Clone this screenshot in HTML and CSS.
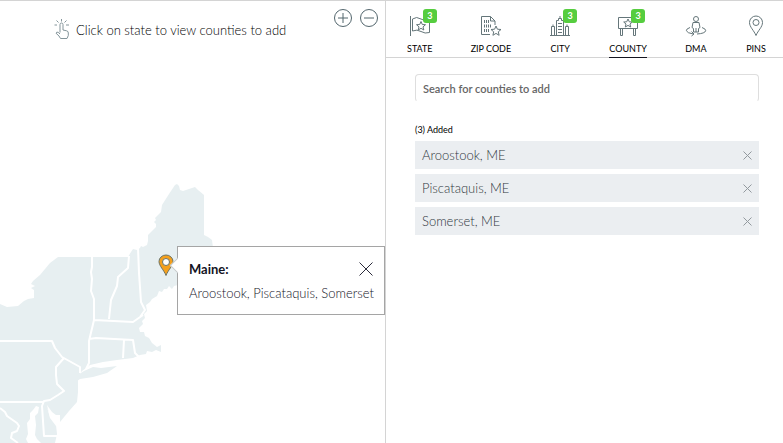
FILE: index.html
```
<!DOCTYPE html>
<html lang="en">
<head>
<meta charset="utf-8">
<meta name="viewport" content="width=device-width, initial-scale=1">
<title>Counties</title>
<link rel="stylesheet" href="styles.css">
</head>
<body>
<div class="app">
  <section class="map-pane" aria-label="Map">
    <svg class="map" width="385" height="443" viewBox="0 0 385 443" aria-hidden="true">
      <path class="land" d="M0 304 7 307 18 306 24 301 28 299 34 298V290L31 288 35 286 31 284 33 281 40 275 50 263 58 257H128L131 252 133 249 137 250 140 248 141 246 143 247 147 245 148 241 148 235 156 227 156 224 154 222 156 220 155 218 158 215 161 212 162 205 169 194 175 185 177 184 179 186 180 190 183 191 195 187 198 190 204 195V235L208 237 212 240 213 248 205 262 190 278 178 285 174 286 172 289 169 286 167 289 164 289 162 292 159 291 157 296 152 299 150 302 146 305 147 311 144 314 145 318 142 321 143 324 139 328 140 332 144 332 145 336 149 338 152 343 157 347 161 345 161 352 156 350 152 352 147 351 146 354 140 355 133 358 117 360 103 362 90 365 82 371 78 377 78 392 77 402 69 411 60 422 60 416 56 415 52 412 47 405 50 417 56 425 57 434 55 443H0Z"/>
      <path class="land" d="M81 373 84 371 93 367 101 368 117 366 107 373 93 377 80 379 77 381 74 379 77 376Z"/>
      <path class="border" d="M92 257V267L91 272 92 279 91 291 94 299V320L89 341V363L86 369M129 256 128 268 118 277 117 286 111 300 109 319M138 248 139 273 141 302 145 310 140 317M94 320 133 322 143 315M89 339 96 338 133 340 135 353 139 357M124 340 123 358M0 341H52L55 348 62 357 80 367 80 373M64 358 56 367V375L57 384 64 391 58 395 50 400 44 401 42 406 44 436H57M0 402H43M0 408 5 412 7 416 17 423 19 426 17 431 12 433 11 438 18 443"/>
      <path class="bay" d="m36 406 3 1-1 6-3 3 1 9-1 10 2 4 4 4-13 0-2-4 2-5-1-11 3-4 0-6 3-3ZM47 407 49 412 55 415 60 415V422L56 426 50 418Z"/>
    </svg>
    <header class="map-bar">
      <svg class="tap" width="18" height="22" viewBox="0 0 18 22" aria-hidden="true"><path d="M6 14.500V6.500a1.300 1.300 0 0 1 3 0V12l3.600.800q1.900.5 1.700 2.200v2.500L13 20.500H6.500L5 18l-3-2.800q.5-1.600 2.200-.9L6 16M.5 7H3M12 7h3M7.500 1v2.500M2.500 2.500l2 2M12.500 2.500l-2 2"/></svg>
      <p class="hint">Click on state to view counties to add</p>
      <div class="zoom">
        <button type="button" aria-label="Zoom in"><svg width="20" height="20" viewBox="0 0 20 20"><circle cx="10" cy="10" r="8.500"/><path d="M5 10h10M10 5v10"/></svg></button>
        <button type="button" aria-label="Zoom out"><svg width="20" height="20" viewBox="0 0 20 20"><circle cx="10" cy="10" r="8.500"/><path d="M5 10h10"/></svg></button>
      </div>
    </header>
    <svg class="marker" width="16" height="23" viewBox="0 0 16 23" aria-hidden="true"><path d="M8 21.500C6 16 1 12 1 7.500a7 6.500 0 0 1 14 0C15 12 10 16 8 21.500Z"/><circle cx="8" cy="8" r="3.500"/></svg>
    <div class="popup" role="dialog" aria-labelledby="popup-title">
      <div class="popup-head">
        <h2 id="popup-title">Maine:</h2>
        <button type="button" aria-label="Close"><svg width="14" height="14" viewBox="0 0 14 14"><path d="m.5.5 13 13M13.500.5l-13 13"/></svg></button>
      </div>
      <p>Aroostook, Piscataquis, Somerset</p>
    </div>
  </section>
  <main class="side">
    <nav class="tabs" aria-label="Area type">
      <a class="tab" href="#state"><span class="icon"><svg width="22" height="22" viewBox="0 0 22 22"><path d="M1.500 1v20M3.500 4q4-3 8.500 0t8.500 1v12.500q-4.500 1.500-8.500-1t-8.500-.5Z"/><path d="m12 6.500 1.300 3 3.200.2-2.500 2.200.8 3.100-2.800-1.700-2.800 1.700.8-3.100-2.500-2.200 3.200-.2Z"/></svg><b class="badge">3</b></span>STATE</a>
      <a class="tab" href="#zip"><span class="icon"><svg width="22" height="22" viewBox="0 0 22 22"><path d="M10 19.500H1.500V1.500h9L15 6v4M10.500 1.500V6H15"/><path class="digits" d="M4.500 5v3M6.500 5v3M8.500 5v3M4.500 9.500v3M6.500 9.500v3M8.500 9.500v3M10.500 9.500v3M4.500 14v3M6.500 14v3M8.500 14v3"/><path d="m16 11 1.400 3.200 3.600.3-2.700 2.300.8 3.500-3.100-1.900-3.100 1.900.8-3.500-2.700-2.300 3.600-.3Z"/></svg></span>ZIP CODE</a>
      <a class="tab" href="#city"><span class="icon"><svg width="22" height="22" viewBox="0 0 22 22"><path d="M7.500 20.500V5.500h2v-2h3v2h2v15M11 3.500V1M7.500 20.500h-5v-9h3v9M14.500 20.500h5v-9h-3v9M4 11.500v-2M18 11.500v-2M9 8.500h4M9 11.500h4M9 14.500h4M9 17.500h4M1 20.500h20"/></svg><b class="badge">3</b></span>CITY</a>
      <a class="tab active" href="#county" aria-current="page"><span class="icon"><svg width="22" height="22" viewBox="0 0 22 22"><path d="M1.500 2.500h19v11h-19ZM3.500 14v6.500h2V14M16.500 14v6.500h2V14"/><path d="m11 4 1.300 2.800 3 .2-2.300 2 .7 3-2.700-1.600L8.300 12l.7-3-2.300-2 3-.2Z"/></svg><b class="badge">3</b></span>COUNTY</a>
      <a class="tab" href="#dma"><span class="icon"><svg width="22" height="22" viewBox="0 0 22 22"><circle cx="11" cy="4" r="2.500"/><path d="M8 7.500h6l1 5-1.500 1V17h-5v-3.500L7 12.500ZM11 13v4M5 12.500q-4 1.500-3.700 3.200.7 2.300 7 3.300M6.500 16.500 9 19l-2.500 2M17 12.500q4 1.500 3.700 3.200-.7 2.800-8.700 3.300"/></svg></span>DMA</a>
      <a class="tab" href="#pins"><span class="icon"><svg width="22" height="22" viewBox="0 0 22 22"><path d="M11 20.500C9 15.500 4.500 12 4.500 7.500a6.500 6.500 0 0 1 13 0C17.500 12 13 15.500 11 20.500Z"/><circle cx="11" cy="7.500" r="3"/></svg></span>PINS</a>
    </nav>
    <div class="content">
      <input class="search" type="search" aria-label="Search for counties to add" placeholder="Search for counties to add">
      <h3>(3) Added</h3>
      <ul class="list">
        <li>Aroostook, ME<button type="button" aria-label="Remove Aroostook"><svg width="9" height="9" viewBox="0 0 9 9"><path d="m.5.5 8 8M8.500.5l-8 8"/></svg></button></li>
        <li>Piscataquis, ME<button type="button" aria-label="Remove Piscataquis"><svg width="9" height="9" viewBox="0 0 9 9"><path d="m.5.5 8 8M8.500.5l-8 8"/></svg></button></li>
        <li>Somerset, ME<button type="button" aria-label="Remove Somerset"><svg width="9" height="9" viewBox="0 0 9 9"><path d="m.5.5 8 8M8.500.5l-8 8"/></svg></button></li>
      </ul>
    </div>
  </main>
</div>
</body>
</html>
```
FILE: styles.css
```
* { box-sizing: border-box; }
body { margin: 0; background: #fff; color: #000; font: 300 13px/20px Lato, "Liberation Sans", sans-serif; }
h2, h3, p, ul { margin: 0; padding: 0; }
button { display: flex; padding: 0; border: 0; background: none; cursor: pointer; }
svg { display: block; fill: none; stroke: #65767a; stroke-width: 1; }

.app { display: grid; grid-template-columns: 385fr 398fr; min-height: 100vh; border-top: 1px solid #d4d4d4; }

.map-pane { position: relative; overflow: hidden; }
.map { position: absolute; left: 0; top: -1px; stroke: none; }
.land { fill: #e7eff1; }
.border { stroke: #fff; stroke-width: 2; stroke-linejoin: round; }
.bay { fill: #fff; }
.map-bar { position: relative; display: flex; align-items: flex-start; padding: 7px 6px 0 54px; }
.tap { margin-top: 10px; stroke: #84959b; }
.hint { margin: 12px 0 0 4px; white-space: nowrap; }
.zoom { display: flex; gap: 6px; margin-left: auto; }
.zoom svg { stroke: #53666d; }

.marker { position: absolute; left: 158px; top: 253px; fill: #f5a01d; stroke: #6b7467; stroke-width: 1; }
.marker circle { fill: #fff; }
.popup { position: absolute; left: 177px; top: 245px; width: 208px; padding: 12px 11px 11px; border: 1px solid #a5a5a5; background: #fff; color: #14141f; }
.popup::before { content: ""; position: absolute; left: -6px; top: 13px; width: 10px; height: 10px; border: solid #c5cacc; border-width: 0 0 1px 1px; background: #fff; transform: rotate(45deg); }
.popup-head { display: flex; justify-content: space-between; align-items: center; margin-bottom: 4px; }
.popup h2 { font-size: 13px; line-height: 20px; }
.popup p { white-space: nowrap; }
.popup svg { stroke: #2b2b3b; }

.side { min-width: 0; border-left: 1px solid #d4d4d4; }
.tabs { display: flex; justify-content: space-between; padding: 14px 16px 0 21px; border-bottom: 1px solid #d4d4d4; }
.tab { display: flex; flex-direction: column; align-items: center; gap: 6px; height: 43px; margin-bottom: -1px; color: #000; font-size: 9px; font-weight: 400; line-height: 12px; text-decoration: none; }
.tab.active { border-bottom: 1px solid #14141f; }
.icon { position: relative; }
.badge { position: absolute; right: -6px; top: -6px; width: 14px; height: 14px; border-radius: 3px; background: #56cd3f; color: #fff; font-size: 9px; line-height: 14px; text-align: center; }
.digits { stroke-width: 1; }

.content { padding: 16px 24px 0 29px; }
.search { display: block; width: 100%; height: 28px; padding: 1px 7px; border: 1px solid #dedede; border-bottom-color: transparent; border-radius: 4px; background: #fff; font: 600 11px/16px Lato, sans-serif; color: #555; appearance: none; }
.search::placeholder { color: #666; opacity: 1; }
.content h3 { margin: 21px 0 4px; color: #000; font-size: 9px; font-weight: 400; line-height: 14px; }
.list { display: grid; gap: 5px; list-style: none; }
.list li { display: flex; align-items: center; justify-content: space-between; height: 28px; padding: 0 7px; background: #ebeef1; color: #30383e; }
.list svg { stroke: #92999e; }
```
